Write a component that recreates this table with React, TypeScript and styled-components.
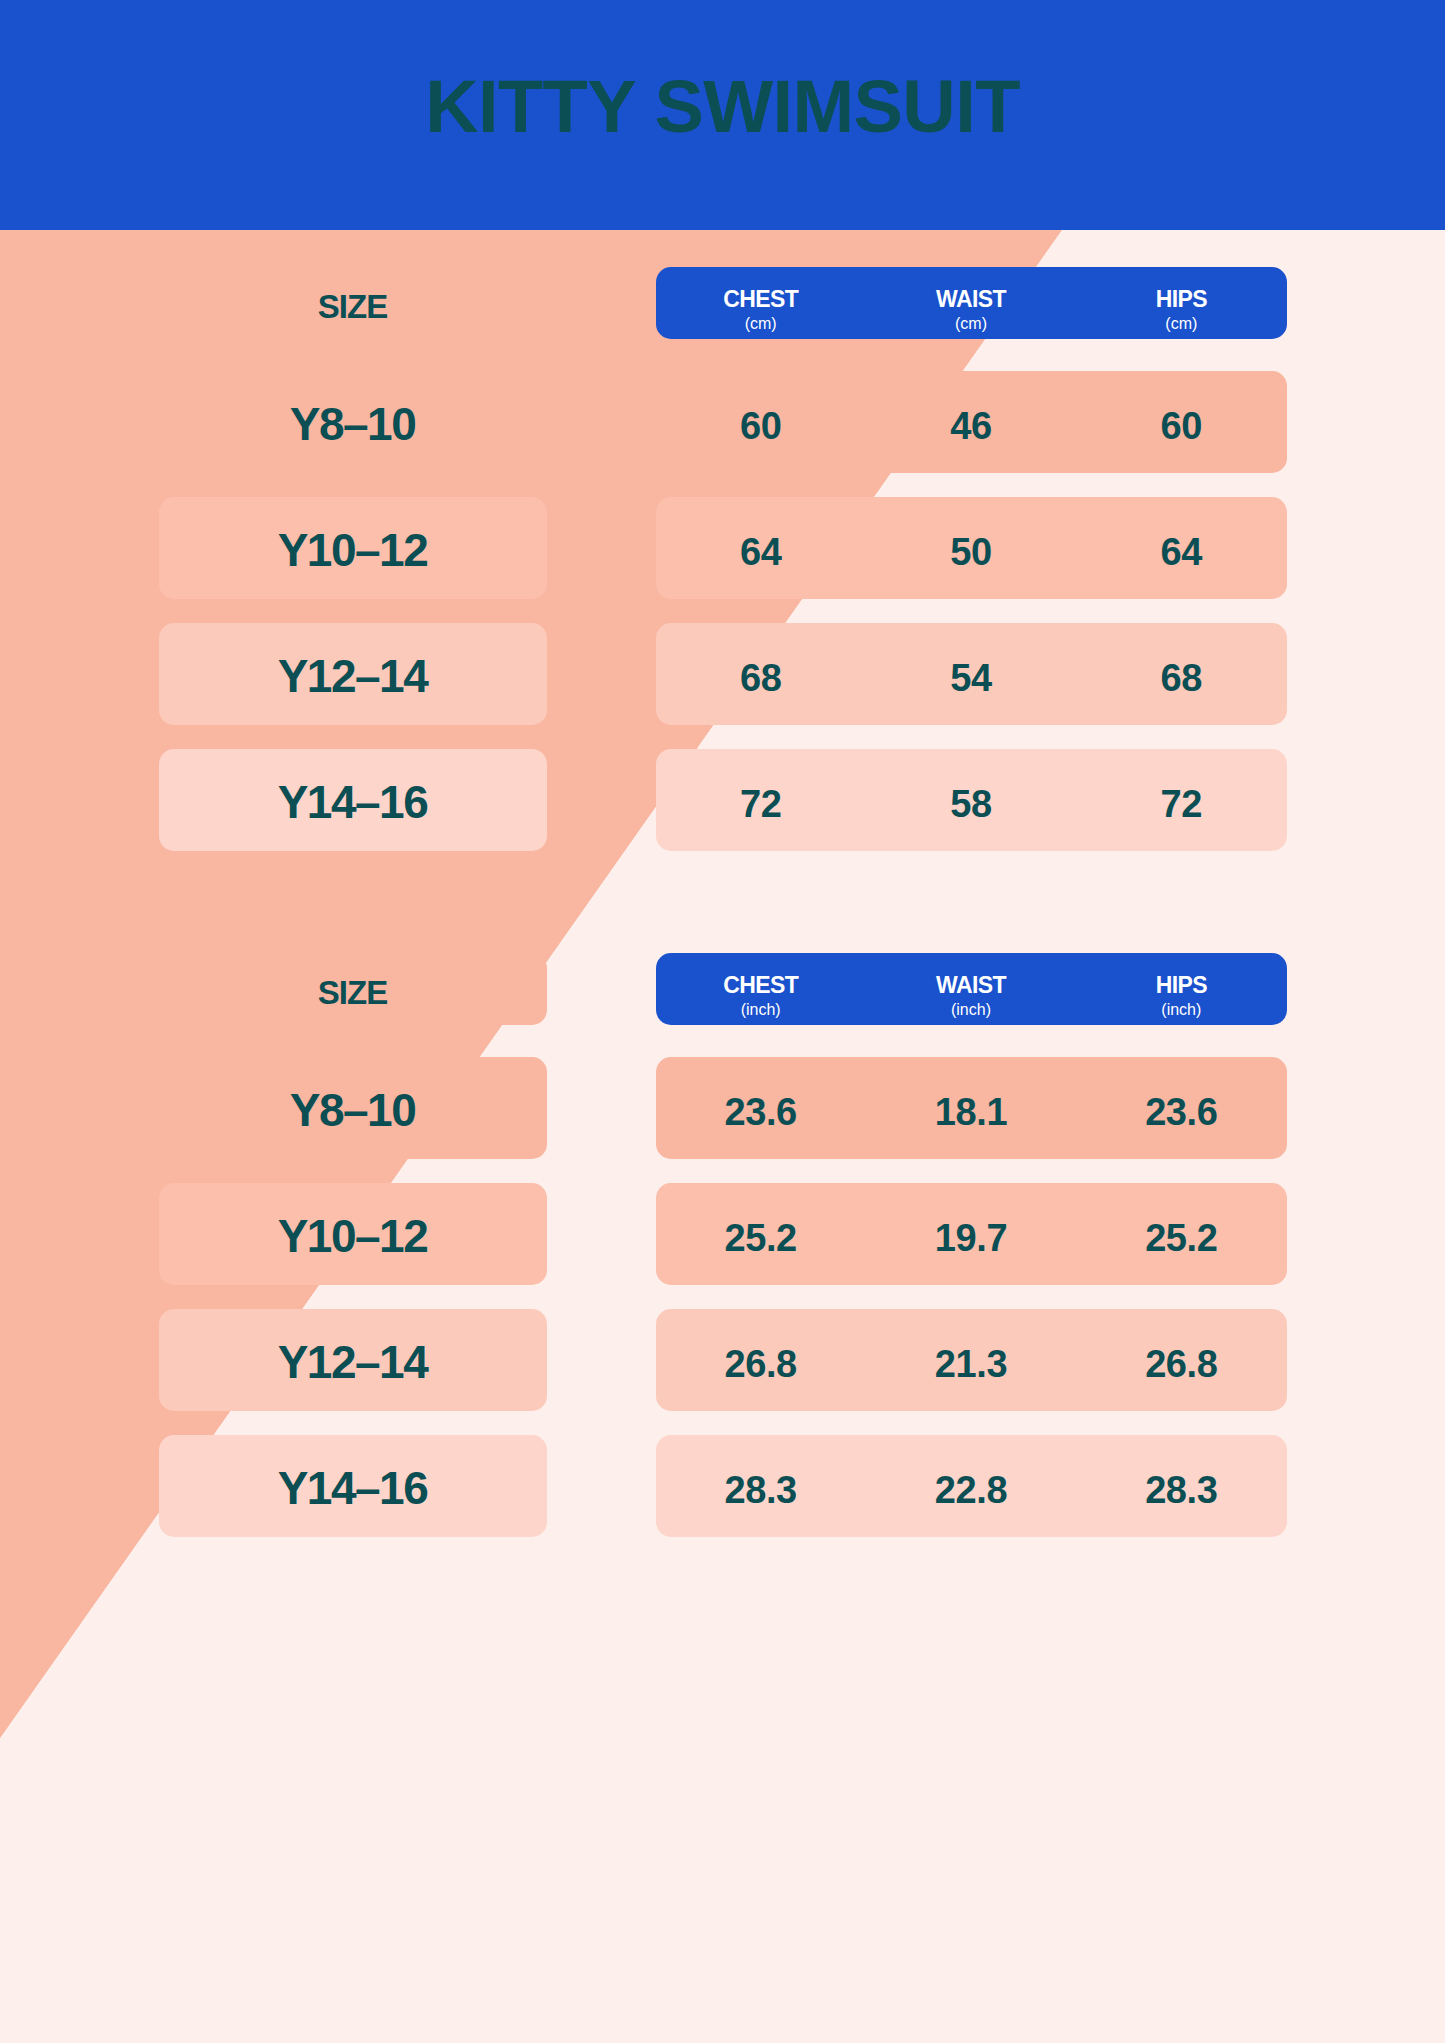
import React from "react";
import styled, { createGlobalStyle } from "styled-components";

const GlobalStyle = createGlobalStyle`
  html, body {
    margin: 0;
    padding: 0;
    background: #fdf0ec;
  }
  body {
    font-family: "Liberation Sans", Arial, Helvetica, sans-serif;
  }
  * { box-sizing: border-box; }
`;

const Page = styled.div`
  width: 100%;
  min-height: 2043px;
  display: flex;
  flex-direction: column;
`;

const Header = styled.header`
  height: 230px;
  background: #1a51cc;
  display: flex;
  justify-content: center;
  align-items: flex-start;
  padding-top: 70px;
`;

const Title = styled.h1`
  margin: 0;
  font-size: 74px;
  line-height: 1;
  font-weight: 700;
  letter-spacing: -0.6px;
  color: #0b4e53;
  text-transform: uppercase;
`;

const Main = styled.main`
  height: 1813px;
  padding-top: 37px;
  display: flex;
  flex-direction: column;
  align-items: center;
  gap: 102px;
  background: linear-gradient(125.15deg, #f9b6a1 868px, #fdf0ec 868.6px);
`;

const Table = styled.section`
  display: grid;
  grid-template-columns: 388px 631px;
  column-gap: 109px;
  row-gap: 24px;
`;

const SizeHead = styled.div`
  height: 72px;
  margin-bottom: 8px;
  border-radius: 15px;
  background: #f9b6a1;
  display: flex;
  align-items: center;
  justify-content: center;
  padding-top: 7px;
  font-size: 33px;
  line-height: 1;
  font-weight: 700;
  letter-spacing: -1px;
  color: #0b4e53;
`;

const MeasureHead = styled.div`
  height: 72px;
  margin-bottom: 8px;
  border-radius: 15px;
  background: #1a51cc;
  display: grid;
  grid-template-columns: repeat(3, 1fr);
`;

const HeadCol = styled.div`
  display: flex;
  flex-direction: column;
  align-items: center;
  padding-top: 20px;
  gap: 3px;
  color: #ffffff;
`;

const HeadName = styled.span`
  font-size: 23px;
  line-height: 24px;
  font-weight: 700;
  letter-spacing: -0.6px;
`;

const HeadUnit = styled.span`
  font-size: 16px;
  line-height: 20px;
  font-weight: 400;
`;

const SizeCell = styled.div<{ $bg: string }>`
  height: 102px;
  border-radius: 15px;
  background: ${(p) => p.$bg};
  display: flex;
  align-items: center;
  justify-content: center;
  padding-top: 4px;
  font-size: 46px;
  line-height: 1;
  font-weight: 700;
  letter-spacing: -1.5px;
  color: #0b4e53;
`;

const ValueRow = styled.div<{ $bg: string }>`
  height: 102px;
  border-radius: 15px;
  background: ${(p) => p.$bg};
  display: grid;
  grid-template-columns: repeat(3, 1fr);
`;

const Value = styled.div`
  display: flex;
  align-items: center;
  justify-content: center;
  padding-top: 7px;
  font-size: 38px;
  line-height: 1;
  font-weight: 700;
  letter-spacing: -0.4px;
  color: #0b4e53;
`;

const rowColors = ["#f9b6a1", "#fbbfac", "#fccabb", "#fdd5ca"];

const sizes = ["Y8–10", "Y10–12", "Y12–14", "Y14–16"];

const cm = [
  ["60", "46", "60"],
  ["64", "50", "64"],
  ["68", "54", "68"],
  ["72", "58", "72"],
];

const inch = [
  ["23.6", "18.1", "23.6"],
  ["25.2", "19.7", "25.2"],
  ["26.8", "21.3", "26.8"],
  ["28.3", "22.8", "28.3"],
];

const columns = ["CHEST", "WAIST", "HIPS"];

function SizeTable({ unit, data }: { unit: string; data: string[][] }) {
  return (
    <Table>
      <SizeHead>SIZE</SizeHead>
      <MeasureHead>
        {columns.map((c) => (
          <HeadCol key={c}>
            <HeadName>{c}</HeadName>
            <HeadUnit>({unit})</HeadUnit>
          </HeadCol>
        ))}
      </MeasureHead>
      {sizes.map((s, i) => (
        <React.Fragment key={s}>
          <SizeCell $bg={rowColors[i]}>{s}</SizeCell>
          <ValueRow $bg={rowColors[i]}>
            {data[i].map((v, j) => (
              <Value key={j}>{v}</Value>
            ))}
          </ValueRow>
        </React.Fragment>
      ))}
    </Table>
  );
}

export default function App() {
  return (
    <>
      <GlobalStyle />
      <Page>
        <Header>
          <Title>Kitty Swimsuit</Title>
        </Header>
        <Main>
          <SizeTable unit="cm" data={cm} />
          <SizeTable unit="inch" data={inch} />
        </Main>
      </Page>
    </>
  );
}
